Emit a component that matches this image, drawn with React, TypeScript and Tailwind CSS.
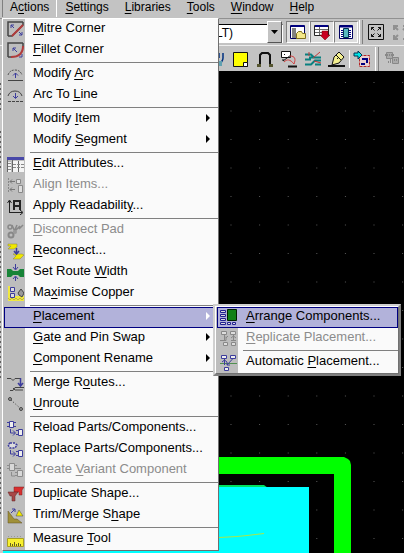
import type { ReactNode } from 'react';
import clsx from 'clsx';

type IconName =
  | 'mitre' | 'fillet' | 'arc' | 'arcLine' | 'table' | 'align' | 'readability'
  | 'disconnect' | 'reconnect' | 'width' | 'copper' | 'merge' | 'unroute'
  | 'reload' | 'replace' | 'variant' | 'duplicate' | 'trim' | 'ruler'
  | 'arrange' | 'replicate' | 'automatic';

type Item = {
  // "&" stands before the mnemonic letter
  label: string;
  icon?: IconName;
  disabled?: boolean;
  active?: boolean;
  submenu?: boolean;
};

const actionGroups: Item[][] = [
  [
    { label: '&Mitre Corner', icon: 'mitre' },
    { label: '&Fillet Corner', icon: 'fillet' },
  ],
  [
    { label: 'Modify &Arc', icon: 'arc' },
    { label: 'Arc To &Line', icon: 'arcLine' },
  ],
  [
    { label: 'Modify &Item', submenu: true },
    { label: 'Modify &Segment', submenu: true },
  ],
  [
    { label: '&Edit Attributes...', icon: 'table' },
    { label: 'Align I&tems...', icon: 'align', disabled: true },
    { label: 'Apply Readabilit&y...', icon: 'readability' },
  ],
  [
    { label: '&Disconnect Pad', icon: 'disconnect', disabled: true },
    { label: '&Reconnect...', icon: 'reconnect' },
    { label: 'Set Route &Width', icon: 'width' },
    { label: 'Ma&ximise Copper', icon: 'copper' },
  ],
  [
    { label: '&Placement', submenu: true, active: true },
    { label: '&Gate and Pin Swap', submenu: true },
    { label: '&Component Rename', submenu: true },
  ],
  [
    { label: 'Merge R&outes...', icon: 'merge' },
    { label: '&Unroute', icon: 'unroute' },
  ],
  [
    { label: 'Reload Parts/Components...', icon: 'reload' },
    { label: 'Replace Parts/Components...', icon: 'replace' },
    { label: 'Create &Variant Component', icon: 'variant', disabled: true },
  ],
  [
    { label: 'Dup&licate Shape...', icon: 'duplicate' },
    { label: 'Trim/Merge S&hape', icon: 'trim' },
  ],
  [{ label: 'Measure &Tool', icon: 'ruler' }],
];

const placementGroups: Item[][] = [
  [
    { label: '&Arrange Components...', icon: 'arrange', active: true },
    { label: '&Replicate Placement...', icon: 'replicate', disabled: true },
  ],
  [{ label: 'Automatic &Placement...', icon: 'automatic' }],
];

const NAVY = '#3c3c9c';

const icons: Record<IconName, ReactNode> = {
  mitre: (
    <>
      <path d="M1 15V1h15M1 15h4L16 4V1" fill="none" stroke="#444" strokeWidth="1.5" />
      <path d="M5 15 16 4" stroke="#b03c3c" strokeWidth="2" />
      <path d="M4 7V4h3M4 4l3 3M15 11v3h-3M15 14l-3-3" fill="none" stroke={NAVY} />
    </>
  ),
  fillet: (
    <>
      <path d="M1 15V1h15M1 15h4M16 1v4" fill="none" stroke="#444" strokeWidth="1.5" />
      <path d="M4 15c7 0 12-3 12-11" fill="none" stroke="#b03c3c" strokeWidth="2" />
      <path d="M6 9V6h3M6 6l4 4M15 12v3h-3" fill="none" stroke={NAVY} />
    </>
  ),
  arc: (
    <>
      <path d="M1 9c1-3 3-5 7-5s6 2 7 5" fill="none" stroke="#555" strokeDasharray="2 1" />
      <path d="M1 14.5h15" stroke="#444" />
      <path d="M8.500 12V7M6 9.500 8.500 7 11 9.500" fill="none" stroke={NAVY} />
    </>
  ),
  arcLine: (
    <>
      <path d="M1 9c1-3 3-5 7-5s6 2 7 5" fill="none" stroke="#444" />
      <path d="M1 14.5h15" stroke="#444" strokeDasharray="3 1" />
      <path d="M8.500 6v5M6 9l2.500 2.500L11 9" fill="none" stroke={NAVY} />
    </>
  ),
  table: (
    <>
      <path d="M0 1h17v3H0z" fill="#4848a8" />
      <path d="M1 6h3v10H1zM6 5h5v11H6zM12 5h5v11h-5z" fill="#f4f4f4" />
      <path d="M.5 4v12M5.500 4v12M11.500 5v11" stroke="#666" />
      <path d="M1 7.500h3M1 10.500h3M1 13.500h3M6 8.500h11M6 11.500h11" stroke="#888" strokeDasharray="3 1" />
    </>
  ),
  align: (
    <>
      <path d="M1.500 1v15" stroke="#888" strokeDasharray="2 1" />
      <path d="M3 4.500h5M5 2.500l-2 2 2 2M3 12.500h5M5 10.500l-2 2 2 2" fill="none" stroke="#777" />
      <path d="M9.500 2.500h4v4h-4zM11.500 8.500h4v7h-4z" fill="#ddd" stroke="#888" />
    </>
  ),
  readability: (
    <>
      <path d="M2.500 15V3M.5 5l2-3 2 3M2 14.500h13M13 12l3 2.500-3 2.500" fill="none" stroke="#222" />
      <path d="M7 12V3h6v9M7 8h6" fill="none" stroke="#222" strokeWidth="2" />
    </>
  ),
  disconnect: (
    <>
      <path d="M5 3l3 7M10 3l-3 7M8 9l5-5M12 7l4-4" stroke="#888" strokeWidth="1.500" />
      <circle cx="3" cy="5" r="2" fill="none" stroke="#888" strokeWidth="1.500" />
      <circle cx="4" cy="13" r="2.500" fill="none" stroke="#888" strokeWidth="2" />
      <circle cx="8" cy="10" r="2" fill="#999" />
    </>
  ),
  reconnect: (
    <>
      <path d="M1 1h9v3L7 6H1l3-3H1zM6 11h9l2 1-4 4H6l3-3z" fill="#f0e800" stroke="#888040" strokeWidth=".5" />
      <path d="M9.500 5v6M7 8l2.500 3L12 8" fill="none" stroke={NAVY} strokeWidth="1.500" />
    </>
  ),
  width: (
    <>
      <path d="M0 5h4l2 2h5l2-2h4v8h-4l-2-2H6l-2 2H0z" fill="#188438" />
      <path d="M8.500 0v5M6 3l2.500 3L11 3M8.500 17v-4M6 15l2.500-3 2.500 3" fill="none" stroke={NAVY} />
    </>
  ),
  copper: (
    <>
      <path d="M1 1h2v14H1zM1 11h16v5H1z" fill="#f0e840" />
      <path d="M3.500 2.500h4v4h-4zM3.500 8.500h4v4h-4z" fill="#ddd" stroke={NAVY} />
      <path d="M11 8l3-4 3 4-2 4-3-2z" fill="#999" stroke="#444" />
      <path d="M1 13l2 2 2-2 2 2 2-2 2 2 2-2 2 2 2-2" fill="none" stroke="#888040" strokeWidth=".5" />
    </>
  ),
  merge: (
    <>
      <path d="M0 3.500h4l2 2 2-2h6M3 15.500h3l2-3h9M6 13l2 2h8" fill="none" stroke="#444" />
      <path d="M13.500 3v8M11 8l2.500 3L16 8" fill="none" stroke={NAVY} strokeWidth="1.500" />
    </>
  ),
  unroute: (
    <>
      <path d="M4 4l10 9" stroke="#333" strokeDasharray="1 2" />
      <circle cx="3" cy="3" r="1.500" fill="#999" stroke="#444" />
      <circle cx="14" cy="13" r="1.500" fill="#999" stroke="#444" />
    </>
  ),
  reload: (
    <>
      <path d="M2.500 1.500h4v6h-4zM11.500 9.500h4v6h-4z" fill="#eee" stroke={NAVY} />
      <path d="M0 2.500h2M0 6.500h2M7 2.500h2M7 6.500h2M9 10.500h2M9 14.500h2" stroke={NAVY} />
      <path d="M3.500 9v4H8M6 10.500 8.500 13 6 15.500" fill="none" stroke={NAVY} />
    </>
  ),
  replace: (
    <>
      <path d="M3 2h5l2 2-2 3H3L1 4z" fill="#ddd" stroke={NAVY} strokeWidth="1.500" strokeDasharray="2 1" />
      <path d="M11.500 9.500h4v6h-4z" fill="#eee" stroke={NAVY} />
      <path d="M9 10.500h2M9 14.500h2M3.500 9v4H8M6 10.500 8.500 13 6 15.500" fill="none" stroke={NAVY} />
    </>
  ),
  variant: (
    <>
      <path d="M2.500 1.500h5v7h-5zM10.500 8.500h5v6h-5z" fill="#d8d8d8" stroke="#8c8c8c" />
      <path d="M0 3.500h2M0 6.500h2M8 3.500h2M8 6.500h6M8 10.500h2M8 13.500h2M4.500 10v4H8" fill="none" stroke="#8c8c8c" />
    </>
  ),
  duplicate: (
    <>
      <path d="M7 1h10l-2 3v5h-3V6H7z" fill="#d83030" stroke="#802020" strokeWidth=".5" />
      <path d="M1 6h10l-3 4v5H5v-5H3z" fill="#a84848" stroke="#602020" strokeWidth=".5" />
    </>
  ),
  trim: (
    <>
      <path d="M1 4v12h14l-5-4H7z" fill="#a09038" stroke="#605020" strokeWidth=".5" />
      <path d="M12 3l4 6H9z" fill="#f0e800" stroke="#444" strokeWidth=".5" />
      <path d="M4 6l4-4M5 2h3v3" fill="none" stroke={NAVY} />
    </>
  ),
  ruler: (
    <>
      <path d="M.5 7.500h16v8H.5z" fill="#f8f030" stroke="#a8a020" />
      <path d="M3.500 15v-3M5.500 15v-2M7.500 15v-4M9.500 15v-2M11.500 15v-3M13.500 15v-2" stroke="#666020" />
      <path d="M1 5.500h15" stroke="#999" strokeDasharray="1 2" />
    </>
  ),
  arrange: (
    <>
      <path d="M7.500.5h9v11h-9z" fill="#108018" stroke="#002000" />
      <path d="M.5 1.500h5v2h-5zM.5 5.500h5v2h-5zM.5 9.500h5v2h-5zM.5 13.500h5v2h-5zM7.500 13.500h3v2h-3zM12.500 13.500h3v2h-3z" fill="#ddd" stroke="#202090" />
    </>
  ),
  replicate: (
    <>
      <path d="M1.500 1.500h5v3h-5zM10.500 1.500h5v3h-5zM3.500 12.500h4v3h-4zM11.500 12.500h4v3h-4z" fill="#ddd" stroke="#888" />
      <path d="M0 10.500h6v-4M11 10.500h5M13.500 5v6M4.500 5v5M11 8l2.500-2L16 8M6 8l2-2" fill="none" stroke="#888" />
    </>
  ),
  automatic: (
    <>
      <path d="M0 9.500h17" stroke="#509050" />
      <path d="M1.500 1.500h5v3h-5zM10.500 1.500h5v3h-5zM4.500 13.500h4v3h-4z" fill="#eee" stroke={NAVY} />
      <path d="M4.500 5v6M12.500 5 7 11M7 8v3h3M2 8l2.500-2L7 8" fill="none" stroke={NAVY} />
    </>
  ),
};

const Mnemonic = ({ text }: { text: string }) => {
  const at = text.indexOf('&');
  if (at < 0) return <>{text}</>;

  return (
    <>
      {text.slice(0, at)}
      <span className="underline decoration-1 underline-offset-2">{text[at + 1]}</span>
      {text.slice(at + 2)}
    </>
  );
};

const MenuRow = ({ item }: { item: Item }) => (
  <button
    type="button"
    role="menuitem"
    disabled={item.disabled}
    aria-haspopup={item.submenu ? 'menu' : undefined}
    className={clsx(
      'flex h-[21px] w-full items-center border text-left',
      item.active ? 'border-[#000080] bg-[#b2b2da]' : 'border-transparent',
      item.disabled ? 'text-[#8c8c8c]' : 'text-black',
    )}
  >
    <span className="flex w-[21px] shrink-0 justify-center">
      {item.icon && (
        <svg className="size-[17px]" viewBox="0 0 17 17" aria-hidden="true">
          {icons[item.icon]}
        </svg>
      )}
    </span>
    <span className="ml-[7px] grow pb-1 leading-4 whitespace-nowrap">
      <Mnemonic text={item.label} />
    </span>
    {item.submenu && (
      <svg
        className={clsx('mr-[7px] mb-1 h-2 w-1', item.active ? 'text-white' : 'text-black')}
        viewBox="0 0 4 8"
        aria-hidden="true"
      >
        <path d="M0 0l4 4-4 4z" fill="currentColor" />
      </svg>
    )}
  </button>
);

const Menu = ({ groups, label }: { groups: Item[][]; label: string }) => (
  <div
    role="menu"
    aria-label={label}
    className="w-full border border-t-white border-r-[#707070] border-b-[#707070] border-l-white bg-[linear-gradient(to_right,#bdbdbd_22px,#fafafa_22px)] pl-px text-[13px]"
  >
    {groups.map((group, i) => (
      <div key={i}>
        {i > 0 && <hr className="my-px ml-[26px] border-[#808080]" />}
        {group.map((item) => (
          <MenuRow key={item.label} item={item} />
        ))}
      </div>
    ))}
  </div>
);

const ToolButton = ({ label, on, children }: { label: string; on?: boolean; children: ReactNode }) => (
  <button
    type="button"
    aria-label={label}
    className={clsx(
      'flex h-[22px] w-6 shrink-0 items-center justify-center border',
      on ? 'border-t-[#808080] border-r-white border-b-white border-l-[#808080] bg-[#dedede]' : 'border-transparent',
    )}
  >
    <svg className="size-[18px]" viewBox="0 0 18 18" fill="none" stroke="#111" aria-hidden="true">
      {children}
    </svg>
  </button>
);

const Grip = () => <span className="mx-px h-6 w-1 shrink-0 border-x border-l-white border-r-[#808080]" />;

const menuNames = ['A&ctions', '&Settings', '&Libraries', '&Tools', '&Window', '&Help'];

const App = () => (
  <div className="relative flex min-h-screen w-full flex-col overflow-hidden bg-black font-['Liberation_Sans',Arial,sans-serif]">
    {/* Menu bar */}
    <nav className="flex h-[18px] bg-[#c3c3c3] pl-0.5 text-xs">
      {menuNames.map((name, i) => (
        <button
          key={name}
          type="button"
          className={clsx(
            'h-[17px] pb-[3px] leading-[14px]',
            i === 0 ? 'border-r border-l border-l-[#808080] border-r-white px-[7px]' : 'px-2',
          )}
        >
          <Mnemonic text={name} />
        </button>
      ))}
    </nav>

    {/* Component toolbar */}
    <div className="flex h-[27px] items-center border-t border-t-[#909090] bg-[#c3c3c3] pl-[180px]">
      <div className="relative mr-[3px] w-[103px] shrink-0">
        <select
          aria-label="Style"
          className="h-[19px] w-full appearance-none border border-t-black border-r-white border-b-white border-l-black bg-white pl-[31px] text-xs leading-4"
        >
          <option>(LT)</option>
        </select>
        <span className="pointer-events-none absolute inset-y-px right-px flex w-[15px] items-center justify-center border border-t-white border-r-[#555] border-b-[#555] border-l-white bg-[#c3c3c3]">
          <svg className="h-1 w-[7px]" viewBox="0 0 7 4" aria-hidden="true">
            <path d="M0 0h7L3.500 4z" />
          </svg>
        </span>
      </div>
      <ToolButton label="Browser" on>
        <path d="M1.500 2.500h14v13h-14z" fill="#fff" stroke="#000060" />
        <path d="M2 3h13" stroke="#000080" strokeWidth="2" />
        <path d="M3 5h4v10H3z" fill="#808080" stroke="none" />
        <path d="M7.500 15.500v-5l2-2h3l1 2h3v5z" fill="#f4e888" stroke="#807020" />
      </ToolButton>
      <ToolButton label="Goto" on>
        <path d="M1.500 2.500h14v10h-14z" fill="#fff" stroke="#222" />
        <path d="M2 3h13" stroke="#000080" strokeWidth="2" />
        <path d="M2 6.500h13M2 9.500h13M6.500 4v8" stroke="#666" />
        <path d="M9 8h6v4h2l-5 5-5-5h2z" fill="#c80020" stroke="#700" strokeWidth=".5" />
      </ToolButton>
      <ToolButton label="Component" on>
        <path d="M2.500 2.500h13v13h-13z" fill="#fff" stroke="#000060" />
        <path d="M3 3.500h12" stroke="#000080" strokeWidth="2" />
        <path d="M4 7.500h10M4 9.500h10M4 11.500h10M4 13.500h10" stroke="#000080" />
        <path d="M6.500 5.500h5v9h-5z" fill="#58b8c0" stroke="#003050" />
      </ToolButton>
      <Grip />
      <ToolButton label="View all">
        <path d="M1.500 1.500h15v15h-15z" />
        <path d="M4.500 7V4.500H7M4.500 4.500l3 3M11 4.500h2.500V7M13.500 4.500l-3 3M4.500 11v2.500H7M4.500 13.500l3-3M11 13.500h2.500V11M13.500 13.500l-3-3" />
      </ToolButton>
      <ToolButton label="View selection">
        <path d="M3 7V3h4M3 3l4 4M12 3h4v4M16 3l-4 4M3 12v4h4M3 16l4-4M12 16h4v-4" stroke="#909090" strokeWidth="2" />
      </ToolButton>
    </div>

    {/* Design toolbar */}
    <div className="flex h-[26px] items-center border-t border-t-[#ededed] bg-[#c3c3c3] pl-[205px]">
      <ToolButton label="Pads">
        <path d="M9 6v4c0 2 2 2 2 4v2M15 3v5c0 3-2 3-2 6M11 3v5" stroke="#003080" strokeWidth="1.500" />
        <path d="M9 11h5v5H9z" fill="#60a0b0" stroke="none" />
      </ToolButton>
      <ToolButton label="Note">
        <path d="M1.500 2.500h14v14h-14z" fill="#ff0" />
        <path d="M11.500 16.500v-4h4v4z" fill="#fff" />
      </ToolButton>
      <ToolButton label="Route">
        <path d="M2 15h2V5l2-2h6l2 2v10h2" strokeWidth="2" />
        <path d="M1 14h4v3H1zM13 14h4v3h-4z" fill="#555530" stroke="none" />
      </ToolButton>
      <ToolButton label="Net">
        <path d="M1.500 1.500h9v6h-9z" fill="#fff" />
        <path d="M3 9v2l8-6M5 4l-1 1" />
        <path d="M10 6c5 0 6 3 4 8M4 12c3-3 6-3 10 2" stroke="#d04040" />
        <path d="M8 16.500h9" strokeWidth="2" />
      </ToolButton>
      <ToolButton label="Layers">
        <path d="M1 4.500h6l3 3h7M1 9.500h6M1 14.500h6l4-4h6M5 7.500h6M11 14.500h6" stroke="#088080" strokeWidth="2" />
        <path d="M9 8l7-6M5 2v4M10 11l7 2" stroke="#c03838" />
      </ToolButton>
      <ToolButton label="Highlight">
        <path d="M0 16h17" strokeWidth="2" />
        <path d="M4 15l2-8 5-5 5 5-5 6z" fill="#f4f090" />
        <path d="M8 5l5 5M9 9l1-1" />
      </ToolButton>
      <span className="h-[18px] w-px shrink-0 bg-white" />
      <ToolButton label="Swap">
        <path d="M6.500 5.500h10v11h-10z" fill="#e8d0d0" stroke="#b02828" strokeDasharray="3 1" />
        <path d="M1 3h4V1l4 4-4 4V6H1z" fill="#00e8e8" stroke="#003050" />
        <path d="M9 9h5v4M8 14h4" stroke="#000080" strokeWidth="2" />
      </ToolButton>
      <Grip />
      <ToolButton label="Group">
        <path d="M3.500 2.500h6v6h-6zM9.500 7.500h6v6h-6z" fill="#aaa" stroke="#888" />
        <path d="M2 5h9M7 10h10M5 12h4" stroke="#888" strokeDasharray="1 1" strokeWidth="2" />
      </ToolButton>
    </div>

    {/* Board canvas */}
    <main className="flex grow overflow-hidden">
      <svg className="h-[482px] w-full" aria-label="Board layout">
        <defs>
          <pattern id="grid" width="28.600" height="28.500" patternUnits="userSpaceOnUse" x="230.500" y="11">
            <path d="M0 0h1v1H0z" fill="#5a5a5a" />
          </pattern>
        </defs>
        <path d="M0 0h1000v1000H0z" fill="url(#grid)" />
        <path d="M0 386h344l4 2 2 2 1 4v88h-17v-79H0z" fill="#00ff00" />
        <path d="M0 414h264l4 3H0z" fill="#00e060" />
        <path d="M0 416h309v66H0z" fill="#00ffff" />
        <path d="M219 466.500l18-1 10-1 17-2" stroke="#a8e848" fill="none" />
        <path d="M0 0h3v482H0z" fill="#c8c8c8" />
        <path d="M.5 12v28M.5 60v38M.5 170v50M.5 250v60M.5 396v50" stroke="#606060" strokeDasharray="2 3" />
      </svg>
    </main>

    {/* Open menus */}
    <div className="absolute top-[18px] left-0.5 w-[217px]">
      <Menu groups={actionGroups} label="Actions" />
      <div className="absolute top-[286px] left-[211px] w-[188px] border-2 border-t-[#d0d0d0] border-r-[#808080] border-b-[#808080] border-l-[#d0d0d0]">
        <Menu groups={placementGroups} label="Placement" />
      </div>
    </div>
  </div>
);

export default App;
